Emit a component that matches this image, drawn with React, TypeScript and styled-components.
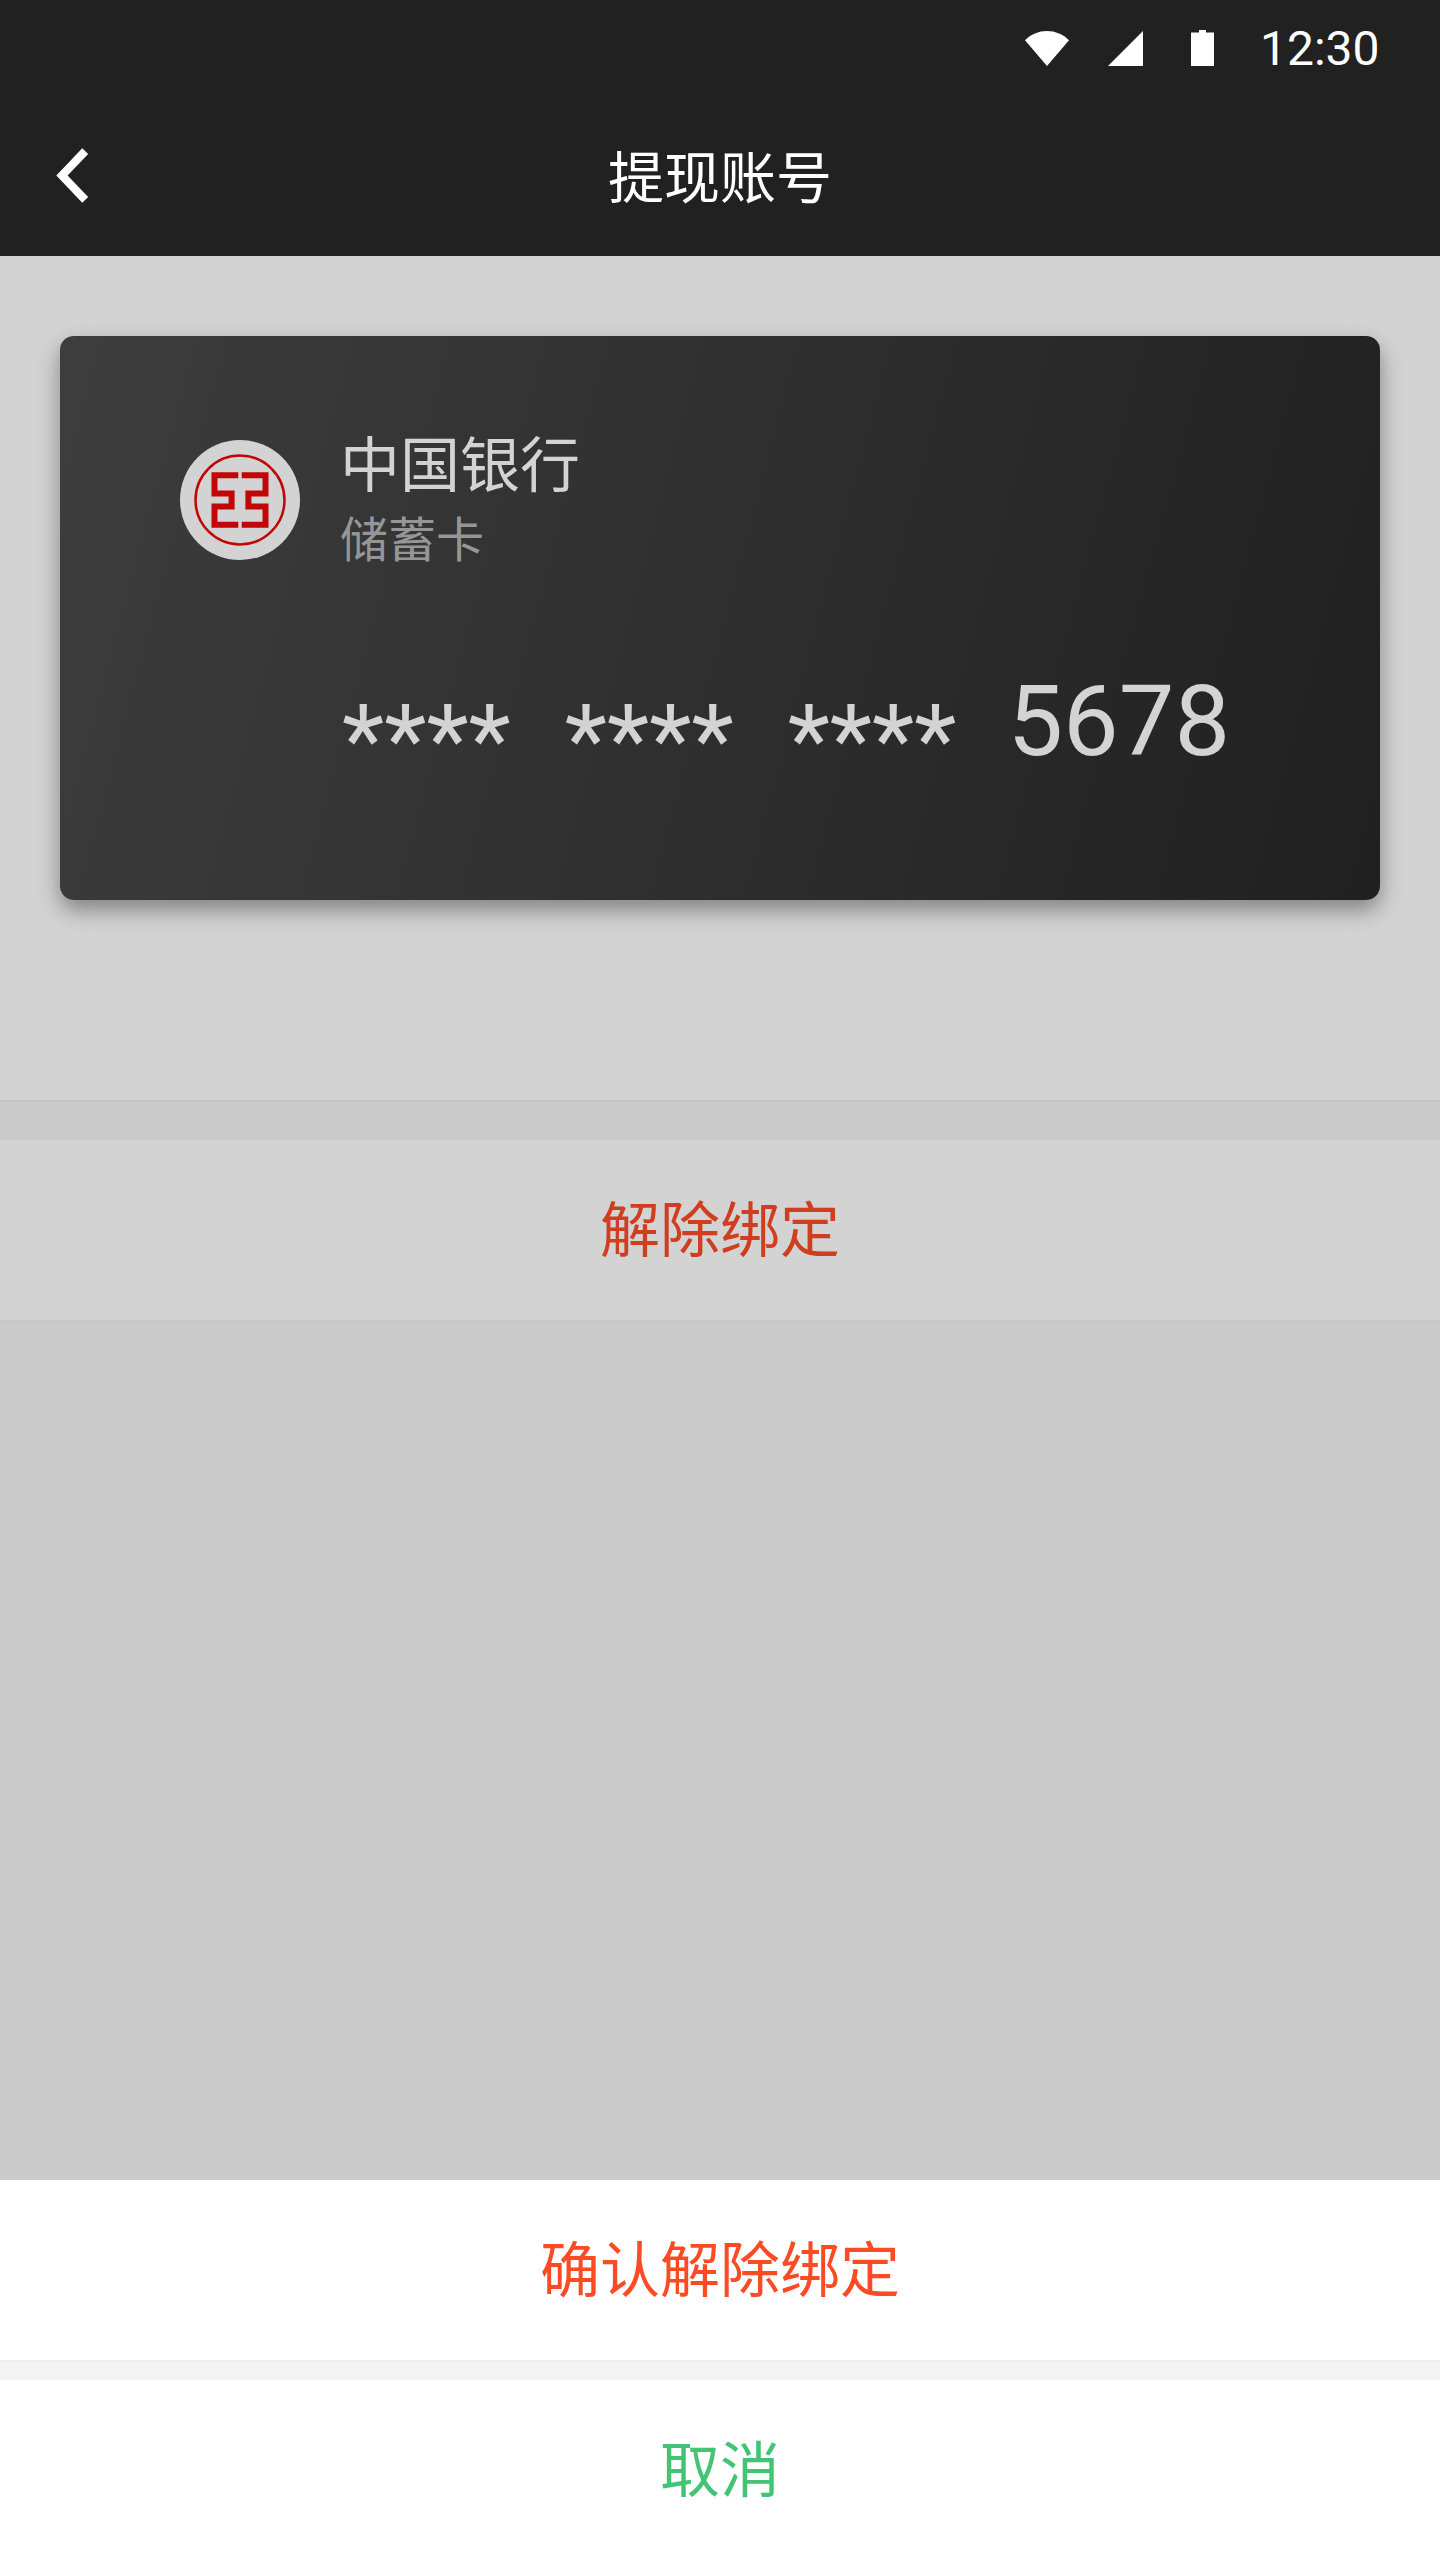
import styled, { createGlobalStyle } from 'styled-components';

const cjk = `Roboto, "Noto Sans CJK SC", sans-serif`;

const GlobalStyle = createGlobalStyle`
  html, body {
    margin: 0;
    padding: 0;
    background: #fff;
    font-family: ${cjk};
  }
`;

const Screen = styled.div`
  width: 1440px;
  height: 2560px;
  display: flex;
  flex-direction: column;
  overflow: hidden;
`;

const Header = styled.header`
  height: 256px;
  flex: none;
  background: #212121;
  color: #fff;
  display: flex;
  flex-direction: column;
`;

const StatusBar = styled.div`
  height: 96px;
  display: flex;
  align-items: center;
  justify-content: flex-end;
  padding-right: 62px;
`;

const StatusIcon = styled.svg<{ $gap: number }>`
  display: block;
  fill: #fff;
  margin-right: ${p => p.$gap}px;
`;

const Clock = styled.span`
  font-family: Roboto, sans-serif;
  font-size: 48px;
  line-height: 52px;
  padding-top: 2px;
  width: 118px;
  white-space: nowrap;
`;

const NavBar = styled.div`
  height: 160px;
  box-sizing: border-box;
  padding-top: 6px;
  position: relative;
  display: flex;
  align-items: center;
  justify-content: center;
`;

const BackIcon = styled.svg`
  position: absolute;
  left: 50px;
  top: 48px;
  fill: none;
  stroke: #fff;
  stroke-width: 8.2;
`;

const Title = styled.h1`
  margin: 0;
  font-size: 56px;
  font-weight: 400;
  line-height: 60px;
  color: #fff;
`;

const CardPanel = styled.section`
  height: 846px;
  flex: none;
  box-sizing: border-box;
  padding: 80px 60px 0;
  background: #d3d3d3;
  border-bottom: 2px solid #c5c5c5;
`;

const Card = styled.div`
  height: 564px;
  box-sizing: border-box;
  padding: 101px 0 0 120px;
  border-radius: 14px;
  background: linear-gradient(105deg, #3d3d3d 0%, #202020 100%);
  box-shadow: 0 10px 22px rgba(0, 0, 0, 0.38);
`;

const BankRow = styled.div`
  display: flex;
  align-items: flex-start;
  gap: 40px;
`;

const BankLogo = styled.svg`
  display: block;
  flex: none;
  margin-top: 3px;
`;

const BankText = styled.div`
  display: flex;
  flex-direction: column;
`;

const BankName = styled.div`
  font-size: 60px;
  line-height: 60px;
  font-weight: 400;
  color: #d3d3d3;
`;

const CardType = styled.div`
  margin-top: 20px;
  font-size: 48px;
  line-height: 48px;
  font-weight: 400;
  color: #969696;
`;

const NumberRow = styled.div`
  margin: 107px 0 0 162px;
  display: flex;
  align-items: flex-start;
  gap: 54px;
  font-family: Roboto, sans-serif;
  font-size: 99px;
  line-height: 100px;
  font-weight: 400;
  color: #d3d3d3;
`;

const Mask = styled.span`
  padding-top: 19px;
  font-size: 98px;
`;

const LastDigits = styled.span`
  margin: -1px 0 0 -3px;
`;

const Spacer = styled.div<{ $height: number; $bg: string }>`
  height: ${p => p.$height}px;
  flex: none;
  background: ${p => p.$bg};
`;

const Backdrop = styled.div`
  flex: 1;
  background: #cacaca;
`;

const ActionRow = styled.div<{ $color: string; $bg: string; $line?: string; $height: number }>`
  height: ${p => p.$height}px;
  flex: none;
  box-sizing: border-box;
  padding-top: 4px;
  display: flex;
  align-items: center;
  justify-content: center;
  font-size: 60px;
  line-height: 60px;
  font-weight: 400;
  color: ${p => p.$color};
  background: ${p => p.$bg};
  border-bottom: ${p => (p.$line ? `2px solid ${p.$line}` : 'none')};
`;

export default function App() {
  return (
    <Screen>
      <GlobalStyle />
      <Header>
        <StatusBar>
          <StatusIcon $gap={39} width="44" height="35" viewBox="0 0 44 35">
            <path d="M22 35 0 9.2C5.8 3.4 13.5 0 22 0s16.200 3.400 22 9.200z" />
          </StatusIcon>
          <StatusIcon $gap={48} width="35" height="35" viewBox="0 0 35 35">
            <path d="M0 35 35 0v35z" />
          </StatusIcon>
          <StatusIcon $gap={46} width="23" height="36" viewBox="0 0 23 36">
            <path d="M8 0h7v2.500h8V36H0V2.500h8z" />
          </StatusIcon>
          <Clock>12:30</Clock>
        </StatusBar>
        <NavBar>
          <BackIcon width="44" height="70" viewBox="0 0 44 70">
            <path d="M35.200 7.200 12 31.500l23.200 24.300" />
          </BackIcon>
          <Title>提现账号</Title>
        </NavBar>
      </Header>

      <CardPanel>
        <Card>
          <BankRow>
            <BankLogo width="120" height="120" viewBox="0 0 120 120">
              <circle cx="60" cy="60" r="60" fill="#d3d3d3" />
              <circle cx="60" cy="60" r="44.500" fill="none" stroke="#c00606" strokeWidth="2.500" />
              <path
                d="M58.300 35.300H34.500V53.500H51.600V66.500H34.500V84.700H58.300M61.700 35.300H85.500V53.500H68.400V66.500H85.500V84.700H61.700"
                fill="none"
                stroke="#c00606"
                strokeWidth="6"
              />
            </BankLogo>
            <BankText>
              <BankName>中国银行</BankName>
              <CardType>储蓄卡</CardType>
            </BankText>
          </BankRow>
          <NumberRow>
            <Mask>****</Mask>
            <Mask>****</Mask>
            <Mask>****</Mask>
            <LastDigits>5678</LastDigits>
          </NumberRow>
        </Card>
      </CardPanel>

      <Spacer $height={38} $bg="#cacaca" />
      <ActionRow $height={182} $color="#cf3e1f" $bg="#d3d3d3" $line="#c6c6c6">解除绑定</ActionRow>
      <Backdrop />

      <ActionRow $height={182} $color="#fb4b25" $bg="#fff" $line="#eeeeee">确认解除绑定</ActionRow>
      <Spacer $height={18} $bg="#f4f4f4" />
      <ActionRow $height={180} $color="#43c475" $bg="#fff">取消</ActionRow>
    </Screen>
  );
}
